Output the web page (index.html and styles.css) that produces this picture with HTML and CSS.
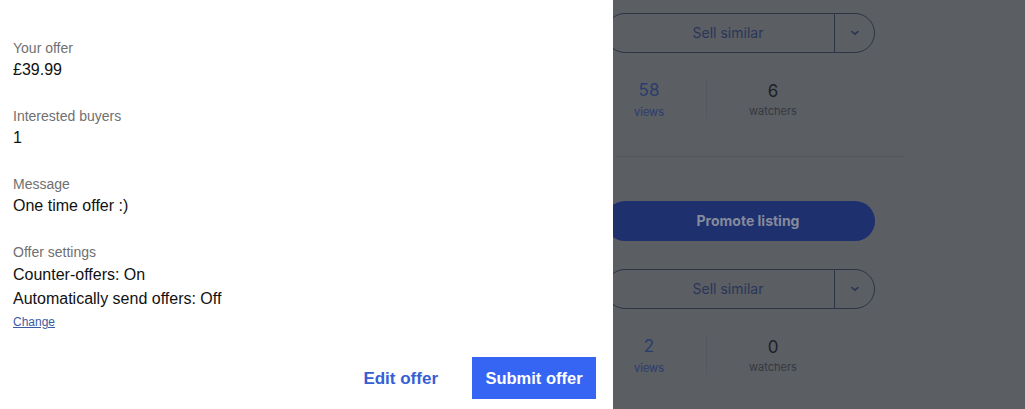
FILE: index.html
```html
<!DOCTYPE html>
<html lang="en">
<head>
    <meta charset="UTF-8">
    <meta name="viewport" content="width=device-width, initial-scale=1.0">
    <title>Review offer</title>
    <link rel="stylesheet" href="styles.css">
</head>
<body>
    <!-- Dimmed listing page behind the drawer -->
    <div class="backdrop">
        <div class="listing">
            <div class="split-btn">
                <span class="split-main">Sell similar</span>
                <span class="split-more">
                    <svg width="10" height="6" viewBox="0 0 10 6"><path d="M2 1.5 L5 4.2 L8 1.5" fill="none" stroke="#2b3550" stroke-width="1.6" stroke-linecap="round"/></svg>
                </span>
            </div>
            <div class="stats">
                <div class="stat first">
                    <span class="stat-num link">58</span>
                    <span class="stat-label link">views</span>
                </div>
                <div class="stat second">
                    <span class="stat-num">6</span>
                    <span class="stat-label">watchers</span>
                </div>
            </div>
            <hr class="rule">
            <div class="promote">Promote listing</div>
            <div class="split-btn">
                <span class="split-main">Sell similar</span>
                <span class="split-more">
                    <svg width="10" height="6" viewBox="0 0 10 6"><path d="M2 1.5 L5 4.2 L8 1.5" fill="none" stroke="#2b3550" stroke-width="1.6" stroke-linecap="round"/></svg>
                </span>
            </div>
            <div class="stats">
                <div class="stat first">
                    <span class="stat-num link">2</span>
                    <span class="stat-label link">views</span>
                </div>
                <div class="stat second">
                    <span class="stat-num">0</span>
                    <span class="stat-label">watchers</span>
                </div>
            </div>
        </div>
    </div>

    <!-- Offer review drawer -->
    <div class="panel">
        <div class="field">
            <div class="field-label">Your offer</div>
            <div class="field-value">£39.99</div>
        </div>
        <div class="field">
            <div class="field-label">Interested buyers</div>
            <div class="field-value">1</div>
        </div>
        <div class="field">
            <div class="field-label">Message</div>
            <div class="field-value">One time offer :)</div>
        </div>
        <div class="field settings">
            <div class="field-label">Offer settings</div>
            <div class="field-value">Counter-offers: On</div>
            <div class="field-value">Automatically send offers: Off</div>
            <a class="change" href="#change">Change</a>
        </div>
        <div class="actions">
            <button class="btn-text" type="button">Edit offer</button>
            <button class="btn-primary" type="button">Submit offer</button>
        </div>
    </div>
</body>
</html>
```

FILE: styles.css
```css
body {
    margin: 0;
    padding: 0;
    background-color: #5b5e63;
    font-family: "Liberation Sans", Arial, sans-serif;
    overflow: hidden;
}
.backdrop {
    height: 409px;
    padding-left: 605px;
    box-sizing: border-box;
}
.listing {
    width: 270px;
    padding-top: 13px;
    font-family: Inter, "Noto Sans", sans-serif;
}
.split-btn {
    display: flex;
    height: 40px;
    box-sizing: border-box;
    border: 1px solid #2d3444;
    border-radius: 20px;
}
.split-main {
    flex: 1;
    display: flex;
    align-items: center;
    justify-content: center;
    padding-left: 16px;
    padding-bottom: 2px;
    font-size: 14px;
    color: #2a3659;
    border-right: 1px solid #2d3444;
}
.split-more {
    width: 39px;
    display: flex;
    align-items: center;
    justify-content: center;
}
.stats {
    display: flex;
    margin-top: 27px;
}
.stat {
    display: flex;
    flex-direction: column;
    align-items: center;
    justify-content: center;
}
.stat.first {
    width: 88px;
    padding-right: 13px;
    border-right: 1px solid #54575d;
}
.stat.second {
    width: 132px;
}
.stat-num {
    font-size: 17px;
    line-height: 20px;
    color: #1e2127;
}
.stat-label {
    font-size: 11px;
    line-height: 14px;
    color: #363940;
    margin-top: 3px;
}
.stat.first .stat-label {
    margin-top: 5px;
}
.link {
    color: #2a3d6e;
}
.rule {
    width: 290px;
    margin: 37px 0 0 10px;
    border: none;
    border-top: 1px solid #53565b;
}
.promote {
    margin-top: 44px;
    height: 40px;
    border-radius: 20px;
    background-color: #1f306e;
    color: #848b9c;
    font-weight: bold;
    font-size: 14px;
    display: flex;
    align-items: center;
    justify-content: center;
    padding-left: 16px;
    padding-bottom: 2px;
    box-sizing: border-box;
    margin-bottom: 28px;
}
.panel {
    position: fixed;
    top: 0;
    left: 0;
    width: 613px;
    height: 100%;
    background-color: #fff;
    box-sizing: border-box;
    padding: 38px 17px 10px 13px;
    display: flex;
    flex-direction: column;
}
.field {
    margin-bottom: 24px;
}
.field-label {
    font-size: 14px;
    line-height: 20px;
    color: #707070;
}
.field-value {
    font-size: 16px;
    line-height: 24px;
    color: #111;
}
.settings .field-label {
    margin-bottom: 1px;
}
.change {
    display: block;
    margin-top: 2px;
    font-size: 12px;
    line-height: 18px;
    color: #3b5ba5;
}
.actions {
    margin-top: auto;
    display: flex;
    justify-content: flex-end;
    align-items: center;
    gap: 34px;
}
.btn-text, .btn-primary {
    font-family: "Liberation Sans", Arial, sans-serif;
    font-weight: bold;
    font-size: 16.5px;
    border: none;
    cursor: pointer;
}
.btn-text {
    background: none;
    color: #3560d4;
    padding: 0;
    margin-top: 2px;
    font-size: 17px;
}
.btn-primary {
    background-color: #3665f3;
    color: #fff;
    height: 42px;
    width: 124px;
}
```
